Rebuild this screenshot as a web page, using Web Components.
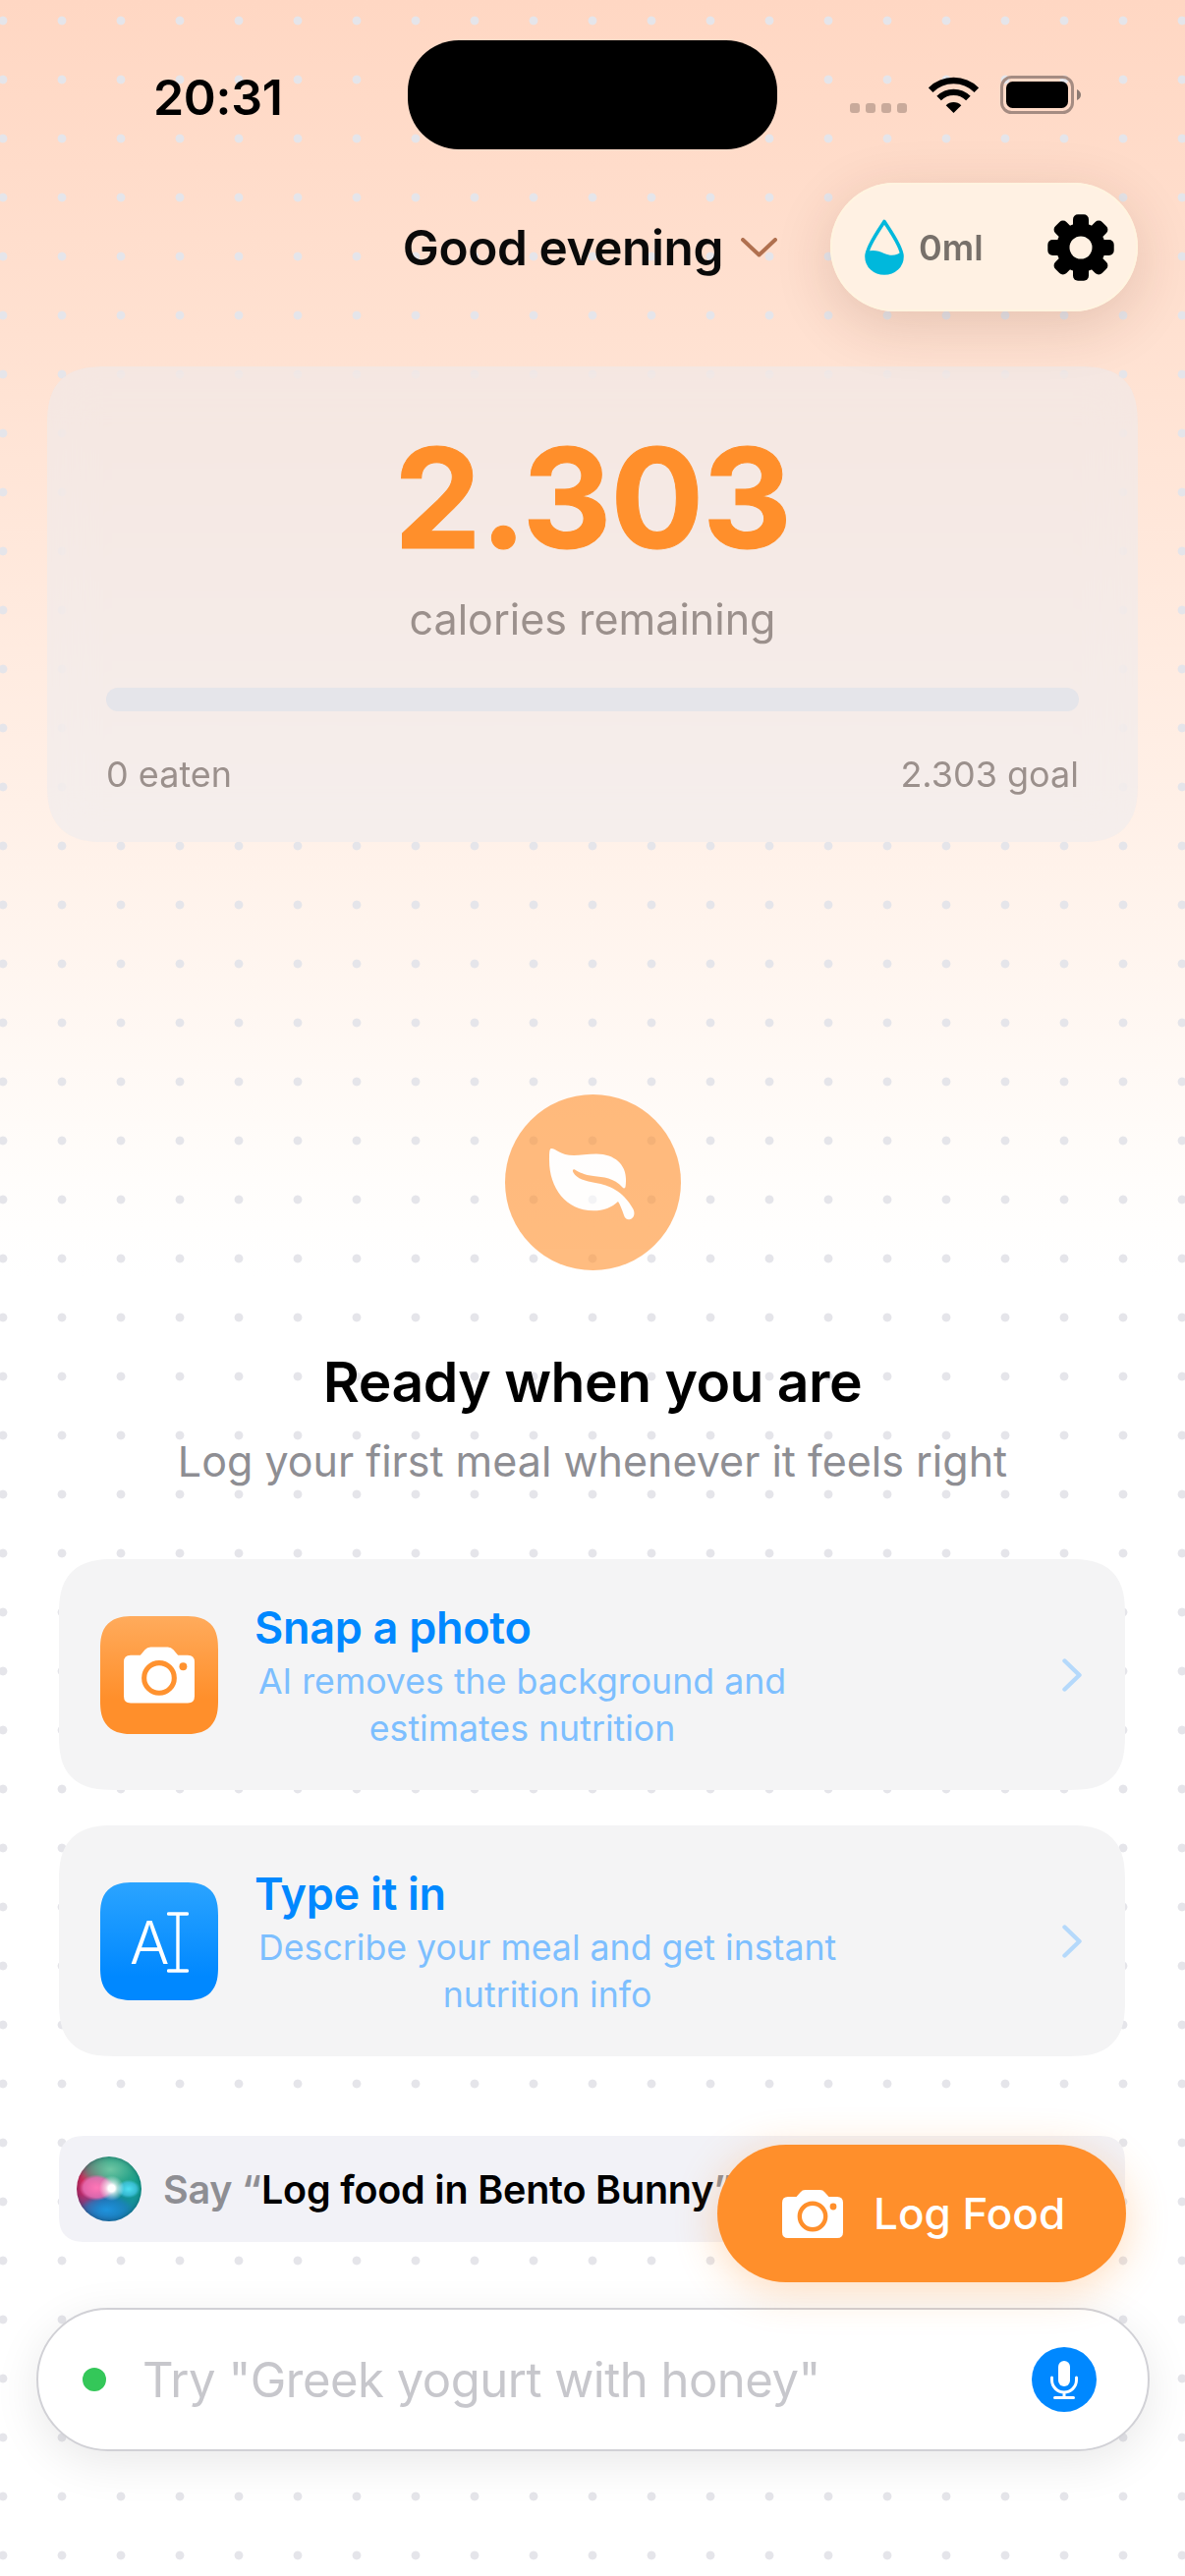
<!doctype html>
<html lang="en">
<head>
<meta charset="utf-8">
<title>Bento Bunny</title>
<style>
html,body{margin:0;padding:0;background:#fff;font-family:Inter,"Noto Sans",sans-serif;}
</style>
</head>
<body>
<app-screen>
  <status-bar></status-bar>
  <greeting-header></greeting-header>
  <calorie-card remaining="2.303" eaten="0 eaten" goal="2.303 goal"></calorie-card>
  <empty-state>
    <span slot="title">Ready when you are</span>
    <span slot="sub">Log your first meal whenever it feels right</span>
  </empty-state>
  <action-row kind="photo">
    <span slot="title">Snap a photo</span>
    <span slot="sub">AI removes the background and<br>estimates nutrition</span>
  </action-row>
  <action-row kind="type">
    <span slot="title">Type it in</span>
    <span slot="sub">Describe your meal and get instant<br>nutrition info</span>
  </action-row>
  <siri-hint></siri-hint>
  <quick-input placeholder='Try "Greek yogurt with honey"'></quick-input>
  <log-fab>Log Food</log-fab>
</app-screen>
<script>
const cam = (ring)=>`<svg viewBox="0 0 62 49" width="100%" height="100%" style="display:block"><path fill="#fff" d="M6 7H14.5L18.5 2.4Q20.5 0 23.5 0H38.5Q41.5 0 43.5 2.4L47.5 7H56Q62 7 62 13V43Q62 49 56 49H6Q0 49 0 43V13Q0 7 6 7Z"/><circle cx="31" cy="27" r="13.2" fill="none" stroke="${ring}" stroke-width="4.4"/><circle cx="52" cy="17" r="3.4" fill="${ring}"/></svg>`;

function def(name, html, init){
  customElements.define(name, class extends HTMLElement{
    constructor(){super();const s=this.attachShadow({mode:'open'});s.innerHTML=typeof html==='function'?html(this):html;}
    connectedCallback(){ if(init) init(this); }
  });
}

def('app-screen',`<style>
:host{display:flex;flex-direction:column;position:relative;width:1206px;height:2622px;overflow:hidden;
 background:
  radial-gradient(circle at 30px 30px,#e5e5ea 0,#e5e5ea 4px,rgba(229,229,234,0) 4.8px) -27px -9px/60px 60px,
  linear-gradient(180deg,#ffd7c3 0,#ffe1d1 340px,#fff2ea 880px,#fffdfb 1200px,#fff 1300px);}
</style><slot></slot>`);

def('status-bar',`<style>
:host{display:grid;grid-template-columns:415px 376px 1fr;align-items:center;height:111px;padding-top:41px;color:#000;}
.time{font:600 50px/60px Inter,sans-serif;padding:4px 0 0 156px;letter-spacing:-.3px;}
.notch{height:111px;border-radius:52px;background:#000;}
.right{position:relative;display:flex;align-items:center;height:40px;padding-left:74px;}
.sig{display:flex;gap:6px;align-self:flex-end;margin-bottom:2px;}
.sig i{display:block;width:10px;height:10px;border-radius:3px;background:#c9aa9b;}
.wifi{display:block;margin-left:22px;}
.bat{display:block;margin-left:22px;}
</style>
<div class="time">20:31</div>
<div class="notch"></div>
<div class="right">
 <div class="sig"><i></i><i></i><i></i><i></i></div>
 <svg class="wifi" width="51" height="37" viewBox="0 0 51 37"><g fill="none" stroke="#000" stroke-width="6.4"><path d="M2.2 13.7A33 33 0 0 1 48.8 13.7"/><path d="M10.6 22.1A21 21 0 0 1 40.4 22.1"/></g><path d="M25.5 37L17.7 29.2A11 11 0 0 1 33.3 29.2Z" fill="#000"/></svg>
 <svg class="bat" width="82" height="39" viewBox="0 0 82 39"><rect x="1.5" y="1.5" width="72" height="36" rx="10" fill="none" stroke="#a58c82" stroke-width="3"/><rect x="6" y="6" width="63" height="27" rx="6.5" fill="#000"/><path d="M78 14Q82 16 82 19.5T78 25Z" fill="#8d7b73"/></svg>
</div>`);

def('greeting-header',`<style>
:host{display:flex;justify-content:flex-end;align-items:center;gap:54px;margin-top:34px;padding-right:48px;position:relative;z-index:2;}
.g{display:flex;align-items:center;gap:18px;}
.t{font:600 49.5px/60px Inter,sans-serif;color:#0a0a0a;letter-spacing:-.4px;}
.pill{display:flex;align-items:center;box-sizing:border-box;width:313px;height:131px;border-radius:66px;background:#fff1e3;padding:0 24px 0 35px;box-shadow:0 14px 60px rgba(90,40,20,.16),inset 0 0 0 2px #fff4e0;}
.drop{display:block;flex:none;}
.ml{font:600 36px/44px Inter,sans-serif;color:#77706a;margin-left:15px;}
.gear{display:block;flex:none;margin-left:auto;}
</style>
<div class="g"><div class="t">Good evening</div>
<svg width="37" height="20" viewBox="0 0 37 20"><path d="M2 2L18.5 17.5L35 2" fill="none" stroke="#b0704f" stroke-width="4" stroke-linecap="round" stroke-linejoin="round"/></svg></div>
<div class="pill">
 <svg class="drop" width="40" height="57" viewBox="0 0 40 57"><path d="M20 2.5C24 9 38 28 38 38C38 48 30 55 20 55C10 55 2 48 2 38C2 28 16 9 20 2.5Z" fill="none" stroke="#00b8dc" stroke-width="3.6" stroke-linejoin="round"/><path d="M2 33C8 31 14 32 20 35C27 38 33 37 38 33V38C38 48 30 55 20 55C10 55 2 48 2 38Z" fill="#00b8dc"/></svg>
 <span class="ml">0ml</span>
 <svg class="gear" width="68" height="68" viewBox="-34 -34 68 68"><g fill="#000">
  <circle r="25"/>
  ${[0,45,90,135,180,225,270,315].map(a=>`<rect x="-8" y="-33.7" width="16" height="17" rx="5" transform="rotate(${a})"/>`).join('')}
 </g><circle r="11.5" fill="#fff1e3"/></svg>
</div>`);

def('calorie-card',(el)=>`<style>
:host{display:flex;flex-direction:column;box-sizing:border-box;margin:56px 48px 0;height:484px;padding:63px 60px 0;border-radius:60px;corner-shape:superellipse(1.4);background:rgba(235,235,240,.5);-webkit-backdrop-filter:blur(24px);backdrop-filter:blur(24px);position:relative;z-index:1;}
.n{font:700 141px/140px Inter,sans-serif;color:#ff8f2b;text-align:center;-webkit-text-stroke:1px #ff8f2b;letter-spacing:-1.2px;margin-top:1px;}
.l{font:400 43px/60px Inter,sans-serif;color:#9b908c;text-align:center;margin-top:23px;}
.bar{height:24px;border-radius:12px;background:#e5e5ea;margin-top:40px;}
.f{display:flex;justify-content:space-between;font:400 36px/44px Inter,sans-serif;color:#9b908c;margin-top:42px;}
</style>
<div class="n">${el.getAttribute('remaining')}</div>
<div class="l">calories remaining</div>
<div class="bar"></div>
<div class="f"><span>${el.getAttribute('eaten')}</span><span>${el.getAttribute('goal')}</span></div>`);

def('empty-state',`<style>
:host{display:flex;flex-direction:column;align-items:center;margin-top:257px;}
.c{width:179px;height:179px;border-radius:50%;background:#ff8f2b;opacity:.6;}
.c svg{display:block;}
.t{font:600 57px/70px Inter,sans-serif;color:#000;margin-top:79px;letter-spacing:-.5px;}
.s{font:400 43px/56px Inter,sans-serif;color:#8e8e93;margin:17px 0 2px;}
</style>
<div class="c"><svg width="179" height="179" viewBox="0 0 179 179"><path fill="#fff" d="M47 55C52 55 56 62 70 62C76 62 84 60.5 93 60.5C112 60.5 123 72 123 86C123 89 123 92 122.5 94C122 96 120.5 95.5 119.5 94.5C111 85 100 84 90 83C81 82 75 79 71 76.5C69.5 75.5 68 77 69.5 79.5C73 86 82 88 92 90C106 92.5 120 98 130 116C133 121 131 126 127.5 127C124 128 122 126 121 123C119 117 117 112 115 109C109 115 100 118.3 90 118.3C62 118.3 45 95 45 67C45 60 45 55 47 55Z"/></svg></div>
<div class="t"><slot name="title"></slot></div>
<div class="s"><slot name="sub"></slot></div>`);

def('action-row',(el)=>{
 const photo=el.getAttribute('kind')==='photo';
 return `<style>
:host{display:flex;align-items:center;box-sizing:border-box;height:235px;margin:0 61px 0 60px;padding:0 44px 0 42px;border-radius:56px;corner-shape:superellipse(1.4);background:#f4f4f5;}
:host([kind=photo]){margin-top:70px;}
:host([kind=type]){margin-top:36px;}
.i{flex:none;position:relative;width:120px;height:120px;border-radius:34px;corner-shape:superellipse(1.4);display:flex;align-items:center;justify-content:center;}
.photo{background:linear-gradient(180deg,#ffab5c 0,#ff8f2b 70%);}
.type{background:linear-gradient(180deg,#2ba4ff 0,#0088ff 80%);}
.cam{width:72px;height:64px;}
.A{font:300 60px/60px Inter,sans-serif;color:#fff;position:absolute;left:30px;top:31px;}
.beam{position:absolute;left:68px;top:30px;display:block;}
.tx{margin-left:37px;padding-top:4px;display:flex;flex-direction:column;align-items:flex-start;}
.h{font:600 45px/52px Inter,sans-serif;color:#0088ff;letter-spacing:-.3px;}
.s{font:400 35.7px/48px Inter,sans-serif;color:#7dbfff;text-align:center;margin:4px 0 0 4px;width:fit-content;}
.ch{display:block;margin-left:auto;flex:none;}
</style>
${photo
 ?`<div class="i photo"><div class="cam">${cam('#ff922f')}</div></div>`
 :`<div class="i type"><span class="A">A</span><svg class="beam" width="22" height="62" viewBox="0 0 22 62"><path d="M1.5 2H20.5M11 2V60M1.5 60H20.5" fill="none" stroke="#fff" stroke-width="3.4" stroke-linecap="round"/></svg></div>`}
<div class="tx"><div class="h"><slot name="title"></slot></div><div class="s"><slot name="sub"></slot></div></div>
<svg class="ch" width="20" height="34" viewBox="0 0 20 34"><path d="M2.5 2.5L17.5 17L2.5 31.5" fill="none" stroke="#b5d9fb" stroke-width="4.4" stroke-linecap="round" stroke-linejoin="round"/></svg>`;
});

def('siri-hint',`<style>
:host{display:flex;align-items:center;box-sizing:border-box;height:108px;margin:81px 61px 0 60px;padding-left:18px;border-radius:28px;corner-shape:superellipse(1.4);background:#f2f2f7;white-space:nowrap;overflow:hidden;}
.o{flex:none;width:66px;height:66px;border-radius:50%;margin-right:22px;position:relative;overflow:hidden;box-shadow:inset 0 0 5px rgba(0,40,60,.45);background:
 radial-gradient(circle at 54% 49%,#fff 0,#fff 7%,rgba(255,255,255,.65) 12%,rgba(255,255,255,0) 26%),
 radial-gradient(ellipse 27% 20% at 31% 48%,rgba(255,120,185,.98) 0,rgba(232,110,180,.85) 75%,rgba(235,110,180,0) 100%),
 radial-gradient(ellipse 18% 14% at 80% 50%,rgba(80,225,245,.98) 0,rgba(70,200,235,.7) 70%,rgba(70,200,235,0) 100%),
 radial-gradient(ellipse 50% 32% at 52% 20%,rgba(125,205,170,.85) 0,rgba(60,170,140,.5) 70%,rgba(60,170,140,0) 100%),
 radial-gradient(ellipse 42% 22% at 46% 82%,rgba(30,150,225,.95) 0,rgba(30,130,200,.6) 70%,rgba(30,130,200,0) 100%),
 conic-gradient(from 0deg,#1f9c7c 0,#14a090 25%,#1478a8 45%,#2b5f9e 58%,#b82a6a 72%,#d92a5a 82%,#5a7a6e 93%,#1f9c7c 100%);}
.t{font:600 39.5px/48px Inter,sans-serif;color:#000;letter-spacing:-.2px;padding-top:1px;}
.g{color:#8e8e93;}
</style>
<div class="o"></div><div class="t"><span class="g">Say “</span>Log food in Bento Bunny<span class="g">”</span></div>`);

def('quick-input',(el)=>`<style>
:host{display:flex;align-items:center;box-sizing:border-box;width:1133px;height:146px;margin:67px 0 0 37px;padding:0 52px 0 45px;border:2px solid #d1d1d6;border-radius:73px;background:#fff;box-shadow:0 12px 48px rgba(0,0,0,.09);position:relative;}
.d{flex:none;width:24px;height:24px;border-radius:50%;background:#34c759;}
.t{font:400 49px/60px Inter,sans-serif;letter-spacing:-.5px;color:#c7c7cc;margin-left:37px;padding-top:2px;white-space:nowrap;}
.m{flex:none;margin-left:auto;width:66px;height:66px;border-radius:50%;background:#0088ff;}
.m svg{display:block;}
</style>
<div class="d"></div><div class="t">${el.getAttribute('placeholder').replace(/"/g,'&quot;')}</div>
<div class="m"><svg width="66" height="66" viewBox="0 0 66 66"><rect x="27" y="14" width="12" height="26" rx="6" fill="#fff"/><path d="M20.5 31V33.5A12.5 12.5 0 0 0 45.5 33.5V31M33 46V51M23.5 51.5H42.5" fill="none" stroke="#fff" stroke-width="3" stroke-linecap="round"/></svg></div>`);

def('log-fab',`<style>
:host{position:absolute;left:730px;top:2183px;box-sizing:border-box;width:416px;height:140px;display:flex;align-items:center;padding-left:66px;border-radius:70px;background:#ff8f2b;box-shadow:0 8px 44px rgba(255,143,43,.32);color:#fff;z-index:3;}
.c{width:62px;height:49px;flex:none;}
.t{font:500 44px/52px Inter,sans-serif;margin-left:31px;}
</style>
<div class="c">${cam('#ff8f2b')}</div><div class="t"><slot></slot></div>`);
</script>
</body>
</html>
